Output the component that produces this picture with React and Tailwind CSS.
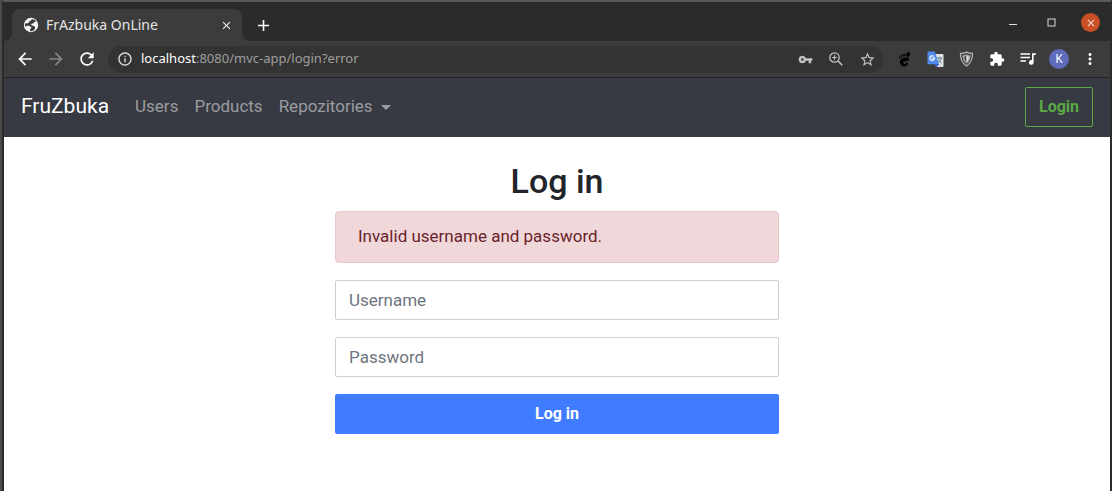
import React from "react";
import {
  MdClose,
  MdAdd,
  MdArrowBack,
  MdArrowForward,
  MdRefresh,
  MdInfoOutline,
  MdVpnKey,
  MdStarOutline,
  MdExtension,
  MdMoreVert,
} from "react-icons/md";

function IconButton({ label, children, className = "text-white" }) {
  return (
    <button
      type="button"
      aria-label={label}
      className={`flex size-5 shrink-0 items-center justify-center ${className}`}
    >
      {children}
    </button>
  );
}

function Globe() {
  return (
    <svg viewBox="0 0 16 16" className="size-4 shrink-0" aria-hidden="true">
      <circle cx="8" cy="8" r="7.200" fill="#f4f4f4" />
      <path
        d="M9.600 2.200C8 2.300 7.500 3.200 7.700 4.100 6.300 4 5.600 4.800 5.800 6 4.600 6.300 3.400 6 2.200 6.400c-.4 1.200-.3 2.200 0 3.200 1.100-.9 3.300-1 4.700-.4 1.200.5 1.600 1.100 1.400 1.900-.2.700-1.300.7-1.300 1.600v1.400c2.400.4 4-.5 4.800-2 .7-1.400.2-2.500-.9-3.100-1.200-.7-2.800-.6-2.800-1.600 0-.8 1.100-.7 1.900-.9.900-.2.700-1.200 1.500-1.500.7-.3 1.300-.4 1.300-1.100-.8-.8-1.900-1.500-3.200-1.700z"
        fill="#3c3c3c"
      />
    </svg>
  );
}

function Magnifier() {
  return (
    <svg viewBox="0 0 14 14" className="size-[14px]" fill="none" stroke="currentColor" aria-hidden="true">
      <circle cx="5.500" cy="5.500" r="4.700" strokeWidth="1.300" />
      <path d="M9 9l4.300 4.300" strokeWidth="1.600" />
      <path d="M3.200 5.500h4.600M5.500 3.200v4.600" strokeWidth="1.100" />
    </svg>
  );
}

function MediaQueue() {
  return (
    <svg viewBox="0 0 16 14" className="h-[14px] w-4" aria-hidden="true">
      <path d="M.500 2h9.500M.500 5.500h9.500M.500 9h5.500" fill="none" stroke="currentColor" strokeWidth="1.600" />
      <path d="M15.800 1.200v1.900h-2.200v7.400a2.300 2.300 0 1 1-1.600-2.200V1.200z" fill="currentColor" />
    </svg>
  );
}

function Foot() {
  return (
    <svg viewBox="0 0 14 16" className="h-[15px] w-[13px]" fill="currentColor" aria-hidden="true">
      <ellipse cx="10.8" cy="2.6" rx="2" ry="2.7" transform="rotate(18 10.8 2.6)" />
      <ellipse cx="6.6" cy="3.2" rx="1.1" ry="1.7" transform="rotate(-5 6.6 3.2)" />
      <ellipse cx="4" cy="4.3" rx="0.9" ry="1.5" transform="rotate(-18 4 4.3)" />
      <ellipse cx="1.9" cy="6.1" rx="0.8" ry="1.3" transform="rotate(-30 1.9 6.1)" />
      <path d="M10.2 6C6.300 5.600 2 7.300 2 10.600c0 2.800 2.400 5 4.800 5 2.100 0 3.700-1.400 3.700-3 0-1.400-1-1.700-1.700-1.200-.8.500-.6 1.500-1.500 1.500-.8 0-1.600-.9-1.500-1.900.2-1.700 6.400-.7 6.400-3.200C12.200 6.700 11.300 6.100 10.200 6z" />
    </svg>
  );
}

function Translate() {
  return (
    <svg viewBox="0 0 17 17" className="size-[17px]" aria-hidden="true">
      <path d="M7 3h8.500a1 1 0 0 1 1 1v11a1 1 0 0 1-1 1H9z" fill="#dfe2e4" />
      <path d="M10 7h5M12.400 5.800V7M14.200 7c-.4 2.200-2 4-3.500 4.800M11.500 8.500c.6 1.500 1.600 2.800 3.200 3.600" fill="none" stroke="#607d8b" strokeWidth="1" />
      <path d="M8 13h4.500L9.200 16.500z" fill="#3a5bd0" />
      <path d="M1.500.500h6.300L12 13.200H1.500a1 1 0 0 1-1-1V1.500a1 1 0 0 1 1-1z" fill="#5289ec" />
      <path d="M6.700 5.300a2.300 2.300 0 1 0 .8 1.900H5.100" fill="none" stroke="#fff" strokeWidth="1.200" />
    </svg>
  );
}

function Shield() {
  return (
    <svg viewBox="0 0 16 17" className="h-4 w-[15px]" aria-hidden="true">
      <path d="M8 1.200c2 .9 4.200 1.300 6.500 1.300C14.600 8.500 12.600 13 8 15.900 3.400 13 1.400 8.500 1.500 2.500 3.800 2.500 6 2.100 8 1.200z" fill="#4a4a4a" stroke="#b4b4b4" strokeWidth="1.300" />
      <path d="M8 3.700c1.300.6 2.600.9 4.200 1-.1 3.700-1.400 6.600-4.200 8.700-2.800-2.100-4.100-5-4.200-8.700 1.600-.1 2.900-.4 4.200-1z" fill="#a8a8a8" />
      <path d="M8 5v7c-1.400-1.300-2.200-3.300-2.400-6C6.500 5.900 7.300 5.500 8 5z" fill="#444444" />
      <path d="M8 5v7c1.400-1.300 2.200-3.300 2.400-6C9.500 5.900 8.700 5.500 8 5z" fill="#e6e6e6" />
    </svg>
  );
}

function TabFlare({ flip = false }) {
  return (
    <svg
      viewBox="0 0 8 8"
      aria-hidden="true"
      className={`absolute bottom-0 size-2 ${flip ? "left-full" : "right-full"}`}
    >
      <path d={flip ? "M0 0v8h8A8 8 0 0 1 0 0z" : "M8 0v8H0A8 8 0 0 0 8 0z"} fill="#3c3c3c" />
    </svg>
  );
}

function TabStrip() {
  return (
    <div className="flex h-[39px] items-end bg-[#2b2b2b] pr-[10px] pl-2">
      <div className="relative flex h-8 w-[230px] items-center rounded-t-lg bg-[#3c3c3c] pr-2 pl-[11px] text-[#e4e4e4]">
        <TabFlare />
        <TabFlare flip />
        <Globe />
        <span className="ml-[7px] flex-1 truncate text-sm">FrAzbuka OnLine</span>
        <button type="button" aria-label="Close tab" className="flex size-4 items-center justify-center text-[#f1f1f1]">
          <MdClose className="size-[13px]" />
        </button>
      </div>
      <button type="button" aria-label="New tab" className="ml-[11px] flex h-8 w-5 items-center justify-center text-white">
        <MdAdd className="size-[19px]" />
      </button>
      <div className="mb-[9px] ml-auto flex items-center gap-5 text-[#dcdcdc]">
        <button type="button" aria-label="Minimize" className="flex size-[19px] items-center justify-center">
          <svg viewBox="0 0 10 10" className="size-[10px]" aria-hidden="true">
            <path d="M1 6.500h8" stroke="currentColor" />
          </svg>
        </button>
        <button type="button" aria-label="Maximize" className="flex size-[19px] items-center justify-center">
          <svg viewBox="0 0 9 9" className="size-[9px]" aria-hidden="true">
            <rect x="1" y="1" width="7" height="7" fill="none" stroke="currentColor" />
          </svg>
        </button>
        <button type="button" aria-label="Close window" className="flex size-[19px] items-center justify-center rounded-full bg-[#c94f24] text-[#f3e3dc]">
          <MdClose className="size-3" />
        </button>
      </div>
    </div>
  );
}

function Toolbar() {
  return (
    <div className="flex h-[37px] items-center gap-[11px] border-b border-[#222222] bg-[#3c3c3c] pr-[10px] pl-[11px]">
      <IconButton label="Back">
        <MdArrowBack className="size-5" />
      </IconButton>
      <IconButton label="Forward" className="text-[#868686]">
        <MdArrowForward className="size-5" />
      </IconButton>
      <IconButton label="Reload">
        <MdRefresh className="size-5" />
      </IconButton>
      <div className="flex h-[27px] min-w-0 flex-1 items-center gap-[11px] rounded-full bg-[#333333] pr-[6px] pl-[9px] text-[#bdbdbd]">
        <div className="flex min-w-0 flex-1 items-center gap-2">
          <MdInfoOutline className="size-4 shrink-0 text-[#e0e0e0]" aria-hidden="true" />
          <span className="truncate text-[13px] text-[#9f9f9f]">
            <span className="text-white">localhost</span>:8080/mvc-app/login?error
          </span>
        </div>
        <IconButton label="Saved passwords" className="text-[#c4c4c4]">
          <MdVpnKey className="size-[15px]" />
        </IconButton>
        <IconButton label="Zoom" className="text-[#c4c4c4]">
          <Magnifier />
        </IconButton>
        <IconButton label="Bookmark this page" className="text-[#c4c4c4]">
          <MdStarOutline className="size-[17px]" />
        </IconButton>
      </div>
      <IconButton label="GNOME Shell integration" className="text-black">
        <Foot />
      </IconButton>
      <IconButton label="Translate">
        <Translate />
      </IconButton>
      <IconButton label="Shield">
        <Shield />
      </IconButton>
      <IconButton label="Extensions">
        <MdExtension className="size-4" />
      </IconButton>
      <IconButton label="Media controls">
        <MediaQueue />
      </IconButton>
      <button type="button" className="flex size-5 shrink-0 items-center justify-center rounded-full bg-[#5f6bbd] text-xs text-white">
        K
      </button>
      <IconButton label="Menu">
        <MdMoreVert className="size-[18px]" />
      </IconButton>
    </div>
  );
}

function Navbar() {
  return (
    <nav className="flex h-[59px] items-center bg-[#373a42] px-[17px] pb-px text-[17px] text-[#9b9ca0]">
      <a href="#" className="text-[21px] text-white">FruZbuka</a>
      <div className="ml-[26px] flex items-center gap-4">
        <a href="#users">Users</a>
        <a href="#products">Products</a>
        <button type="button" className="flex items-center gap-2">
          Repozitories
          <svg viewBox="0 0 10 5" className="h-[5px] w-[10px]" fill="currentColor" aria-hidden="true">
            <path d="M0 0h10L5 5z" />
          </svg>
        </button>
      </div>
      <a href="#login" className="ml-auto flex h-10 items-center rounded-[2px] border border-[#5ba846] px-[13px] text-base font-bold text-[#5ba846]">
        Login
      </a>
    </nav>
  );
}

function Field({ label, type, name }) {
  return (
    <input
      type={type}
      name={name}
      aria-label={label}
      placeholder={label}
      className="h-10 w-full rounded-[2px] border border-[#cdced6] bg-white px-[13px] text-[17px] text-[#212529] placeholder:text-[#6c757d]"
    />
  );
}

function LoginForm() {
  return (
    <main className="flex-1 bg-white pt-6 pb-8">
      <form className="mx-auto w-full max-w-[444px]" onSubmit={(e) => e.preventDefault()}>
        <h1 className="mb-[10px] text-center text-[34px] leading-10 font-medium text-[#212529]">Log in</h1>
        <div className="flex flex-col gap-[17px]">
          <div role="alert" className="flex h-[52px] items-center rounded border border-[#eac8cc] bg-[#f0d7da] px-[22px] text-[17px] text-[#6b1f2a]">
            Invalid username and password.
          </div>
          <Field label="Username" type="text" name="username" />
          <Field label="Password" type="password" name="password" />
          <button type="submit" className="h-10 rounded-[2px] bg-[#407cff] text-base font-bold text-white">
            Log in
          </button>
        </div>
      </form>
    </main>
  );
}

export default function App() {
  return (
    <div className="flex min-h-screen border-l-2 border-[#4c4b48] bg-[#2b2b2b]">
      <div className="flex min-w-0 flex-1 flex-col border-x-2 border-t-2 border-x-[#2b2b2b] border-t-[#5a5a5a]">
        <header className="font-['Noto_Sans','Open_Sans',sans-serif]">
          <TabStrip />
          <Toolbar />
        </header>
        <div className="flex flex-1 flex-col font-[Roboto,sans-serif]">
          <Navbar />
          <LoginForm />
        </div>
      </div>
    </div>
  );
}
